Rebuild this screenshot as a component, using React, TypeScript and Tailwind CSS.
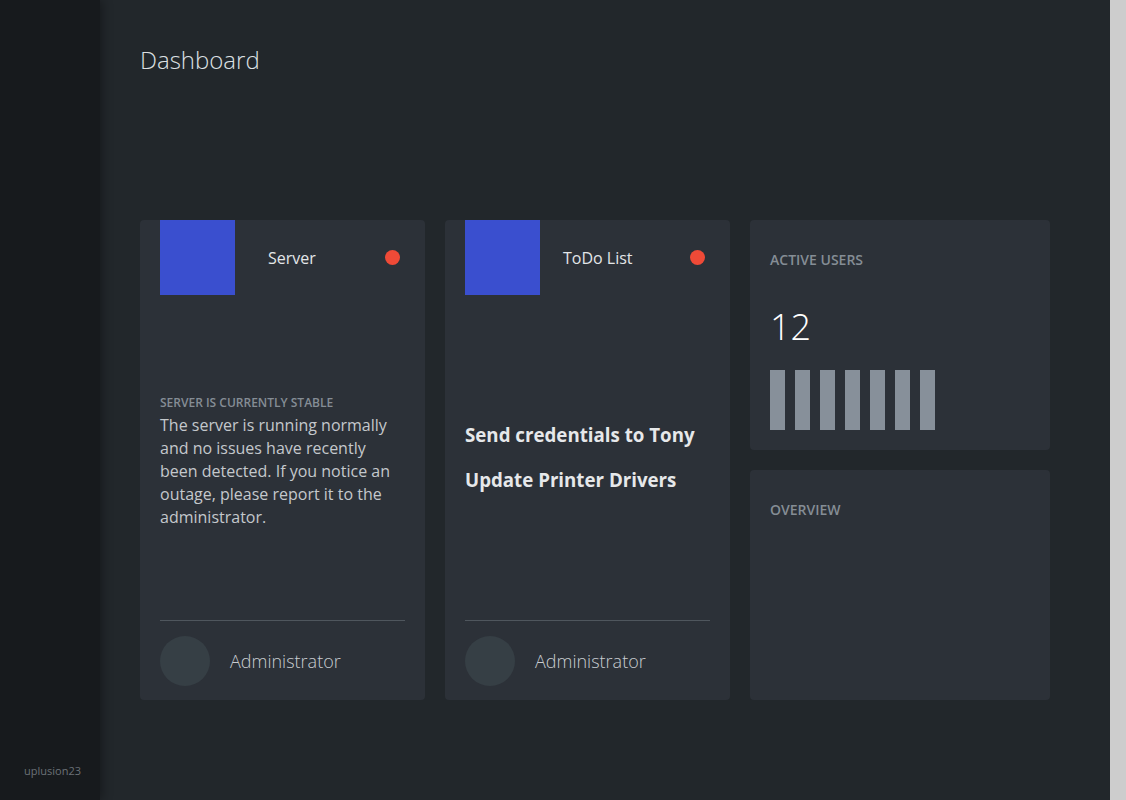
import React from "react";

const font = { fontFamily: '"Open Sans", "Noto Sans", sans-serif' };

function Header({ title, ml }: { title: string; ml: string }) {
  return (
    <div className="flex items-center h-[75px] px-5">
      <div className="w-[75px] h-[75px] bg-[#3a4fcf] shrink-0" />
      <div className={`${ml} text-[16px] text-[#e3e6e8]`}>{title}</div>
      <div className="ml-auto mr-[5px] w-[15px] h-[15px] rounded-full bg-[#ef4a37]" />
    </div>
  );
}

function Footer() {
  return (
    <div className="mx-5 border-t border-[#4f565d] pt-[15px] pb-[14px] flex items-center">
      <div className="w-[50px] h-[50px] rounded-full bg-[#363f45]" />
      <div className="ml-5 text-[18px] font-light text-[#c9cdd1]">Administrator</div>
    </div>
  );
}

export default function App() {
  return (
    <div className="flex w-[1126px] h-[800px] overflow-hidden bg-[#22272b]" style={font}>
      <aside className="relative z-10 w-[100px] shrink-0 h-full bg-[#171a1d] shadow-[2px_0_10px_rgba(0,0,0,0.35)] flex flex-col justify-end">
        <div className="pb-[21px] pl-6 text-[11px] text-[#6b7177]">uplusion23</div>
      </aside>
      <main className="flex-1 h-full pl-10 pt-[44px]">
        <h1 className="text-[24px] leading-8 font-light text-[#dde0e3]">Dashboard</h1>
        <div className="mt-[144px] flex gap-5 h-[480px]">
          <div className="w-[285px] bg-[#2c3138] rounded flex flex-col">
            <Header title="Server" ml="ml-[33px]" />
            <div className="flex-1 flex flex-col justify-center px-5 pt-[6px]">
              <div className="text-[12px] font-semibold text-[#858d95] leading-[20px]">SERVER IS CURRENTLY STABLE</div>
              <p className="mt-[1px] text-[16px] leading-[23px] text-[#c4c8cc]">
                The server is running normally and no issues have recently been detected. If you notice an outage, please report it to the administrator.
              </p>
            </div>
            <Footer />
          </div>
          <div className="w-[285px] bg-[#2c3138] rounded flex flex-col">
            <Header title="ToDo List" ml="ml-[23px]" />
            <div className="flex-1 flex flex-col justify-center px-5 pb-[2px] gap-[20px]">
              <div className="text-[18.72px] font-bold text-[#e6e8ea] leading-[25px]">Send credentials to Tony</div>
              <div className="text-[18.72px] font-bold text-[#e6e8ea] leading-[25px]">Update Printer Drivers</div>
            </div>
            <Footer />
          </div>
          <div className="w-[300px] flex flex-col gap-5">
            <div className="h-[230px] bg-[#2c3138] rounded px-5 pt-[31px]">
              <div className="text-[14px] font-semibold text-[#858d95] leading-[18px]">ACTIVE USERS</div>
              <div className="mt-[38px] text-[36px] font-light text-white leading-[40px]">12</div>
              <div className="mt-[23px] flex gap-[10px]">
                {[0, 1, 2, 3, 4, 5, 6].map((i) => (
                  <div key={i} className="w-[15px] h-[60px] bg-[#87909a]" />
                ))}
              </div>
            </div>
            <div className="h-[230px] bg-[#2c3138] rounded px-5 pt-[31px]">
              <div className="text-[14px] font-semibold text-[#858d95] leading-[18px]">OVERVIEW</div>
            </div>
          </div>
        </div>
      </main>
      <div className="w-4 shrink-0 h-full bg-[#cdcdcd]" />
    </div>
  );
}
